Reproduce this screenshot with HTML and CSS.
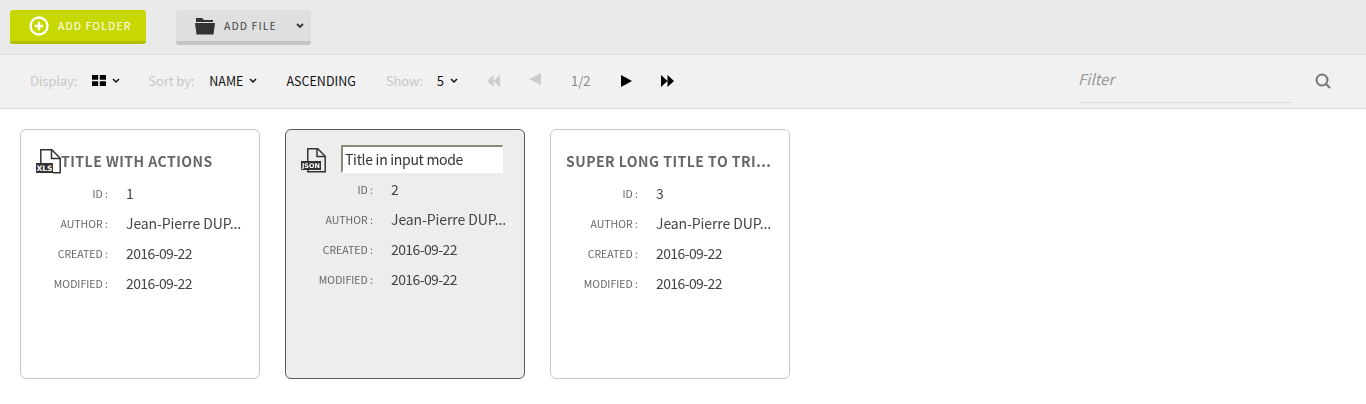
FILE: index.html
```html
<!DOCTYPE html>
<html lang="en">
<head>
  <meta charset="UTF-8" />
  <title>Folder list</title>
  <link rel="stylesheet" href="styles.css">
</head>
<body>
  <header class="action-bar">
    <button class="btn btn-primary">
      <svg class="btn-icon" width="20" height="20" viewBox="0 0 20 20">
        <circle cx="10" cy="10" r="8.5" fill="none" stroke="#fff" stroke-width="2.4"/>
        <path d="M10 5.8v8.4M5.8 10h8.4" stroke="#fff" stroke-width="2.4"/>
      </svg>
      <span>ADD FOLDER</span>
    </button>
    <button class="btn btn-default">
      <svg class="btn-icon" width="20" height="18" viewBox="0 0 20 18">
        <path d="M1 1h6l2 2h9v2H1z" fill="#333"/>
        <path d="M0 6h20l-1.500 11.500H1.500z" fill="#333"/>
      </svg>
      <span>ADD FILE</span>
      <svg class="caret-file" width="8" height="6" viewBox="0 0 8 6"><path d="M1 1l3 3 3-3" fill="none" stroke="#333" stroke-width="1.800"/></svg>
    </button>
  </header>

  <nav class="toolbar">
    <span class="label">Display:</span>
    <span class="value value-display">
      <svg width="14" height="11" viewBox="0 0 14 11"><path d="M0 0h6.200v4.800H0zM7.800 0H14v4.800H7.800zM0 6.200h6.200V11H0zM7.800 6.200H14V11H7.800z"/></svg>
      <svg class="caret" width="8" height="6" viewBox="0 0 8 6"><path d="M1 1l3 3 3-3" fill="none" stroke="#111" stroke-width="1.500"/></svg>
    </span>
    <span class="label label-sort">Sort by:</span>
    <span class="value value-name">NAME
      <svg class="caret" width="8" height="6" viewBox="0 0 8 6"><path d="M1 1l3 3 3-3" fill="none" stroke="#111" stroke-width="1.500"/></svg>
    </span>
    <span class="value value-order">ASCENDING</span>
    <span class="label label-show">Show:</span>
    <span class="value value-show">5
      <svg class="caret" width="8" height="6" viewBox="0 0 8 6"><path d="M1 1l3 3 3-3" fill="none" stroke="#111" stroke-width="1.500"/></svg>
    </span>
    <svg class="pager-first" width="13" height="12" viewBox="0 0 13 12"><path d="M6.500 0v12L0 6zM13 0v12L6.500 6z" fill="#ccc"/></svg>
    <svg class="pager-prev" width="12" height="12" viewBox="0 0 12 12"><path d="M12 0v12L0 6z" fill="#ccc"/></svg>
    <span class="page-count">1/2</span>
    <svg class="pager-next" width="11" height="12" viewBox="0 0 11 12"><path d="M0 0v12l11-6z"/></svg>
    <svg class="pager-last" width="13" height="12" viewBox="0 0 13 12"><path d="M0 0v12l6.500-6zM6.500 0v12L13 6z"/></svg>
    <div class="filter">
      <span class="filter-input">Filter</span>
      <svg class="filter-icon" width="16" height="16" viewBox="0 0 16 16">
        <circle cx="7" cy="7" r="5.500" fill="none" stroke="#777" stroke-width="2"/>
        <path d="M11 11l4 4" stroke="#777" stroke-width="2"/>
      </svg>
    </div>
  </nav>

  <main class="card-list">
    <article class="card">
      <div class="card-title">
        <svg class="file-icon" width="26" height="25" viewBox="0 0 26 25">
          <path d="M4.800 14V.8h11l8.400 8.400v14.600H17" fill="none" stroke="#333" stroke-width="1.500"/>
          <path d="M15.500 1v8.500h8.500" fill="none" stroke="#333" stroke-width="1.500"/>
          <rect x="0" y="14" width="17" height="10" fill="#333"/>
          <text x="8.500" y="22" class="file-type">XLS</text>
        </svg>
        <h2 class="title-text">TITLE WITH ACTIONS</h2>
      </div>
      <dl class="meta">
        <dt>ID :</dt><dd>1</dd>
        <dt>AUTHOR :</dt><dd>Jean-Pierre DUP...</dd>
        <dt>CREATED :</dt><dd class="meta-date">2016-09-22</dd>
        <dt>MODIFIED :</dt><dd class="meta-date">2016-09-22</dd>
      </dl>
    </article>

    <article class="card card-selected">
      <div class="card-title card-title-edit">
        <svg class="file-icon" width="26" height="25" viewBox="0 0 26 25">
          <path d="M6.800 13V.8h10l7.400 7.400v15.600H6.800V22" fill="none" stroke="#333" stroke-width="1.500"/>
          <path d="M16 1v7.500h8" fill="none" stroke="#333" stroke-width="1.500"/>
          <rect x="0" y="13" width="20" height="9" fill="#333"/>
          <text x="10" y="20.300" class="file-type file-type-small">JSON</text>
        </svg>
        <input class="title-input" type="text" value="Title in input mode">
      </div>
      <dl class="meta">
        <dt>ID :</dt><dd>2</dd>
        <dt>AUTHOR :</dt><dd>Jean-Pierre DUP...</dd>
        <dt>CREATED :</dt><dd class="meta-date">2016-09-22</dd>
        <dt>MODIFIED :</dt><dd class="meta-date">2016-09-22</dd>
      </dl>
    </article>

    <article class="card">
      <div class="card-title">
        <h2 class="title-text">SUPER LONG TITLE TO TRI...</h2>
      </div>
      <dl class="meta">
        <dt>ID :</dt><dd>3</dd>
        <dt>AUTHOR :</dt><dd>Jean-Pierre DUP...</dd>
        <dt>CREATED :</dt><dd class="meta-date">2016-09-22</dd>
        <dt>MODIFIED :</dt><dd class="meta-date">2016-09-22</dd>
      </dl>
    </article>
  </main>
</body>
</html>
```

FILE: styles.css
```css
body {
  margin: 0;
  background-color: #fff;
  color: #333;
  font-family: "Noto Sans CJK SC", "Noto Sans", sans-serif;
  font-size: 14px;
  height: 404px;
  overflow: hidden;
  will-change: opacity;
}

/* top bar */
.action-bar {
  display: flex;
  align-items: flex-start;
  height: 44px;
  padding: 10px 0 0 10px;
  background-color: #eaeaea;
  border-bottom: 1px solid #dcdcdc;
}
.btn {
  display: flex;
  align-items: center;
  height: 34px;
  padding: 0;
  border: none;
  border-radius: 3px;
  font-family: inherit;
  font-size: 10.500px;
  letter-spacing: 1.100px;
}
.btn-primary {
  width: 136px;
  background-color: #c6d800;
  border-bottom: 3px solid #b1bf00;
  color: #fff;
}
.btn-primary .btn-icon {
  margin-left: 19px;
}
.btn-primary span {
  margin-left: 9px;
}
.btn-default {
  width: 135px;
  height: 35px;
  margin-left: 30px;
  background-color: #dfdfdf;
  border-bottom: 4px solid #c4c4c4;
  color: #444;
}
.btn-default .btn-icon {
  margin-left: 19px;
}
.btn-default span {
  margin-left: 9px;
}
.caret-file {
  margin-left: auto;
  margin-right: 7px;
}

/* display options */
.toolbar {
  display: flex;
  align-items: center;
  height: 50px;
  padding: 0 0 3px 30px;
  background-color: #f1f1f1;
  border-bottom: 1px solid #dcdcdc;
  font-size: 13px;
  color: #111;
}
.label {
  color: #c8c8c8;
  letter-spacing: -0.100px;
}
.value {
  display: flex;
  align-items: center;
}
.caret {
  margin: 2px 0 0 6px;
}
.value-display { margin-left: 15px; }
.label-sort { margin-left: 28px; }
.value-name { margin-left: 15px; font-size: 12.500px; }
.value-order { margin-left: 29px; font-size: 12.500px; }
.label-show { margin-left: 30px; }
.value-show { margin-left: 14px; }
.pager-first { margin: 1px 0 0 29px; }
.pager-prev { margin: -3px 0 0 29px; }
.page-count { margin-left: 30px; color: #888; }
.pager-next { margin: 1px 0 0 30px; }
.pager-last { margin: 1px 0 0 29px; }
.filter {
  display: flex;
  align-items: flex-start;
  align-self: flex-start;
  margin-left: auto;
  margin-right: 35px;
}
.filter-input {
  width: 215px;
  height: 48px;
  box-sizing: border-box;
  padding-top: 13px;
  font-size: 15px;
  font-style: italic;
  color: #999;
  border-bottom: 1px solid #dedede;
}
.filter-icon {
  margin: 18px 0 0 22px;
}

/* cards */
.card-list {
  display: flex;
  gap: 25px;
  padding: 20px 0 0 20px;
}
.card {
  width: 240px;
  height: 250px;
  box-sizing: border-box;
  padding: 15px;
  background-color: #fff;
  border: 1px solid #c8c8c8;
  border-radius: 6px;
}
.card-selected {
  background-color: #ededed;
  border-color: #5a5a5a;
}
.card-title {
  display: flex;
  align-items: center;
  height: 32px;
}
.card-title-edit {
  height: 28px;
}
.file-icon {
  flex: none;
  margin-top: 1px;
  margin-right: -1px;
}
.card-title-edit .file-icon {
  margin-top: 3px;
}
.file-type {
  font-family: "DejaVu Sans", sans-serif;
  font-size: 7.500px;
  font-weight: bold;
  fill: #fff;
  text-anchor: middle;
}
.file-type-small {
  font-size: 6.500px;
}
.title-text {
  margin: 0;
  font-size: 14px;
  font-weight: 700;
  letter-spacing: 0.480px;
  color: #666;
  white-space: nowrap;
}
.title-input {
  width: 162px;
  height: 28px;
  margin-left: 15px;
  box-sizing: border-box;
  padding: 0 2px;
  border: 2px solid #fff;
  border-top-color: #8a8a78;
  border-left-color: #8a8a78;
  border-right-width: 1px;
  background-color: #fff;
  font-family: inherit;
  font-size: 14px;
  letter-spacing: -0.300px;
  color: #333;
  outline: none;
}
.meta {
  display: grid;
  grid-template-columns: 72px 1fr;
  column-gap: 18px;
  grid-auto-rows: 30px;
  align-items: center;
  margin: 1px 0 0;
}
.meta dt {
  text-align: right;
  font-size: 10.500px;
  color: #666;
}
.meta dd {
  margin: 0;
  font-size: 14px;
  letter-spacing: -0.100px;
  color: #444;
  white-space: nowrap;
}
.meta .meta-date {
  letter-spacing: -0.600px;
}
```
